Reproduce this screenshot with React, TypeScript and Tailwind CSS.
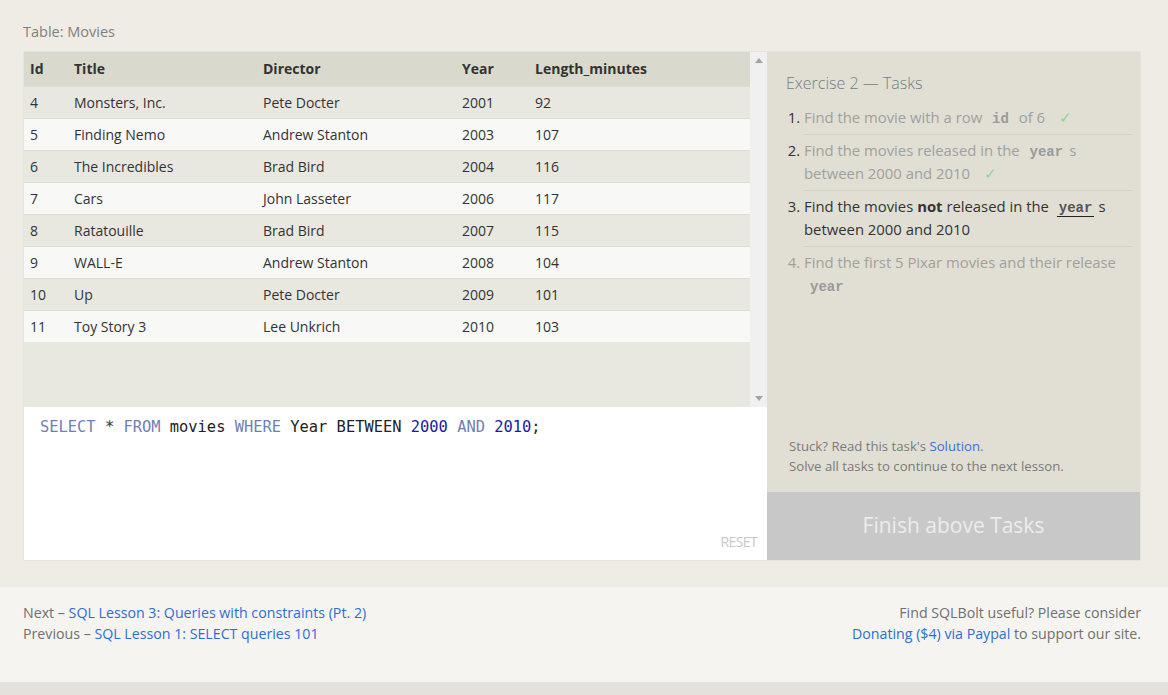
import React from 'react';

const rows = [
  ['4', 'Monsters, Inc.', 'Pete Docter', '2001', '92'],
  ['5', 'Finding Nemo', 'Andrew Stanton', '2003', '107'],
  ['6', 'The Incredibles', 'Brad Bird', '2004', '116'],
  ['7', 'Cars', 'John Lasseter', '2006', '117'],
  ['8', 'Ratatouille', 'Brad Bird', '2007', '115'],
  ['9', 'WALL-E', 'Andrew Stanton', '2008', '104'],
  ['10', 'Up', 'Pete Docter', '2009', '101'],
  ['11', 'Toy Story 3', 'Lee Unkrich', '2010', '103'],
];

const Code = ({ children, active }: { children: React.ReactNode; active?: boolean }) => (
  <code
    className={
      'mx-[4px] px-[2px] leading-[0] font-bold text-[14px] font-["Liberation_Mono","DejaVu_Sans_Mono",monospace] ' +
      (active ? 'text-[#555] border-b-[1.5px] border-[#222]' : 'text-[#9a9a9a]')
    }
  >
    {children}
  </code>
);

const Check = () => <span className="ml-[10px] text-[#8fd19e]">✓</span>;

export default function App() {
  return (
    <div className="min-h-screen bg-[#e4e0db] font-['Open_Sans',sans-serif]">
      <div className="bg-[#efece5] pl-[23px] pr-[27px] pt-[22px] pb-[26px]">
        <div className="text-[14.5px] leading-[20px] text-[#808080] mb-[9px]">Table: Movies</div>

        <div className="flex border border-[#e6e4dc] h-[510px]">
          {/* left: table + editor */}
          <div className="w-[743px] flex flex-col">
            <div className="h-[355px] flex bg-[#e9e8e0]">
              <div className="flex-1">
                <table className="w-full text-[14px] text-[#333] border-collapse">
                  <thead>
                    <tr className="h-[34px] bg-[#d9d9cd] text-left">
                      <th className="pl-[6px] w-[50px] font-bold">Id</th>
                      <th className="w-[189px] font-bold">Title</th>
                      <th className="w-[199px] font-bold">Director</th>
                      <th className="w-[73px] font-bold">Year</th>
                      <th className="font-bold">Length_minutes</th>
                    </tr>
                  </thead>
                  <tbody>
                    {rows.map((r, i) => (
                      <tr
                        key={r[0]}
                        className={
                          'h-[32px] border-t border-[#dedcd4] ' +
                          (i % 2 === 0 ? 'bg-[#e9e8e0]' : 'bg-[#f8f8f7]')
                        }
                      >
                        <td className="pl-[6px]">{r[0]}</td>
                        <td>{r[1]}</td>
                        <td>{r[2]}</td>
                        <td>{r[3]}</td>
                        <td>{r[4]}</td>
                      </tr>
                    ))}
                  </tbody>
                </table>
              </div>
              <div className="w-[17px] bg-[#f0f0f0] flex flex-col items-center justify-between py-[6px]">
                <svg width="8" height="5" viewBox="0 0 8 5"><path d="M0 5 L4 0 L8 5Z" fill="#a3a3a3" /></svg>
                <svg width="8" height="5" viewBox="0 0 8 5"><path d="M0 0 L4 5 L8 0Z" fill="#a3a3a3" /></svg>
              </div>
            </div>
            <div className="flex-1 bg-white flex flex-col justify-between px-[16px] pt-[8px] pb-[8px]">
              <div className="text-[15.4px] leading-[24px] text-[#222] font-['DejaVu_Sans_Mono','Liberation_Mono',monospace]">
                <span className="text-[#6f7fb5]">SELECT</span> <span className="text-[#333]">*</span>{' '}
                <span className="text-[#6f7fb5]">FROM</span> movies <span className="text-[#6f7fb5]">WHERE</span> Year BETWEEN{' '}
                <span className="text-[#1a1aa6]">2000</span> <span className="text-[#6f7fb5]">AND</span>{' '}
                <span className="text-[#1a1aa6]">2010</span>;
              </div>
              <div className="self-end text-[14px] text-[#c8c8c8] tracking-[-0.6px] -mr-[6px]">RESET</div>
            </div>
          </div>

          {/* right: tasks */}
          <div className="flex-1 bg-[#e1dfd4] flex flex-col">
            <div className="flex-1 flex flex-col pt-[19px]">
              <div className="pl-[19px] text-[16px] leading-[24px] font-light text-[#747c86] mb-[6.5px]">
                Exercise 2 — Tasks
              </div>
              <ol className="list-decimal pl-[37px] pr-[8px] text-[14.85px] leading-[23px]">
                <li className="py-[4.5px] border-b border-[#d3d1c5] text-[#a0a0a0] marker:text-[#333]">
                  Find the movie with a row <Code>id</Code> of 6 <Check />
                </li>
                <li className="py-[4.5px] border-b border-[#d3d1c5] text-[#a0a0a0] marker:text-[#333]">
                  Find the movies released in the <Code>year</Code>s between 2000 and 2010 <Check />
                </li>
                <li className="py-[4.5px] border-b border-[#d3d1c5] text-[#333] marker:text-[#333]">
                  Find the movies <b>not</b> released in the <Code active>year</Code>s between 2000 and 2010
                </li>
                <li className="py-[4.5px] text-[#a0a0a0] marker:text-[#a0a0a0]">
                  Find the first 5 Pixar movies and their release <Code>year</Code>
                </li>
              </ol>
              <div className="mt-auto px-[22px] pb-[16px] text-[13.2px] leading-[20px] text-[#7a7a7a]">
                <div>
                  Stuck? Read this task's <span className="text-[#3a6fd8]">Solution</span>.
                </div>
                <div>Solve all tasks to continue to the next lesson.</div>
              </div>
            </div>
            <div className="h-[68px] bg-[#c8c8c8] flex items-center justify-center text-[21px] text-[#ececec]">
              Finish above Tasks
            </div>
          </div>
        </div>
      </div>

      <div className="bg-[#f5f4f0] h-[95px] pl-[23px] pr-[27px] pt-[15px] flex justify-between text-[14.2px] leading-[21px] text-[#707070]">
        <div>
          <div>
            Next – <span className="text-[#2c6ed8]">SQL Lesson 3: Queries with constraints (Pt. 2)</span>
          </div>
          <div>
            Previous – <span className="text-[#2c6ed8]">SQL Lesson 1: SELECT queries 101</span>
          </div>
        </div>
        <div className="text-right">
          <div>Find SQLBolt useful? Please consider</div>
          <div>
            <span className="text-[#2c6ed8]">Donating ($4) via Paypal</span> to support our site.
          </div>
        </div>
      </div>
    </div>
  );
}
